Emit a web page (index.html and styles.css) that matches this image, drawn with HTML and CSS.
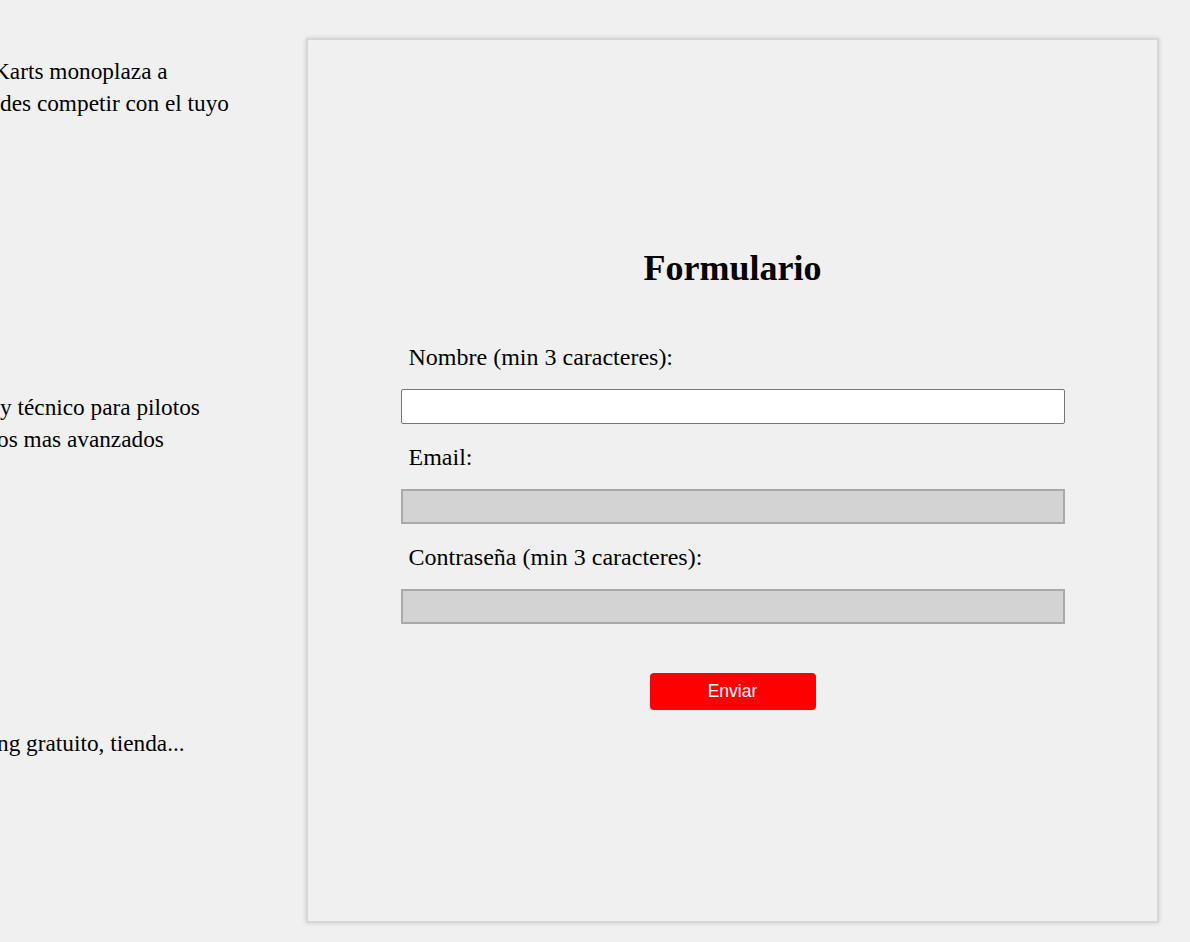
FILE: index.html
```html
<!DOCTYPE html>
<html lang="es">
<head>
<meta charset="utf-8">
<title>Formulario</title>
<link rel="stylesheet" href="styles.css">
</head>
<body>
<div class="page">
  <div class="left">
    <section class="info">
      <p class="line cut-k">Karts monoplaza a</p>
      <p class="line">des competir con el tuyo</p>
    </section>
    <section class="info">
      <p class="line">y técnico para pilotos</p>
      <p class="line cut-o">os mas avanzados</p>
    </section>
    <section class="info">
      <p class="line cut-n">ng gratuito, tienda...</p>
    </section>
  </div>
  <div class="card">
    <h2 class="title">Formulario</h2>
    <form class="form">
      <label class="label" for="nombre">Nombre (min 3 caracteres):</label>
      <input class="field" id="nombre" type="text">
      <label class="label" for="email">Email:</label>
      <input class="field off" id="email" type="email" disabled>
      <label class="label" for="pass">Contraseña (min 3 caracteres):</label>
      <input class="field off" id="pass" type="password" disabled>
      <button class="send" type="button">Enviar</button>
    </form>
  </div>
</div>
</body>
</html>
```
FILE: styles.css
```css
html, body {
  margin: 0;
  padding: 0;
  background: #f0f0f0;
  font-family: "Liberation Serif", "Times New Roman", serif;
  color: #000;
}
.page {
  display: flex;
  gap: 32px;
  padding-top: 38px;
  width: 1190px;
  height: 942px;
  box-sizing: border-box;
}
.left {
  width: 274px;
  overflow: hidden;
  padding-top: 17px;
}
.info {
  height: 336px;
}
.line {
  margin: 0;
  font-size: 23.3px;
  line-height: 32px;
  white-space: nowrap;
}
.cut-k { margin-left: -7px; }
.cut-o { margin-left: -3px; }
.cut-n { margin-left: -3px; }
.card {
  width: 853px;
  height: 885px;
  box-sizing: border-box;
  border: 2px solid #d6d6d6;
  box-shadow: 0 0 5px rgba(0, 0, 0, 0.14);
  background: #f0f0f0;
  display: flex;
  flex-direction: column;
  align-items: center;
  padding-top: 208px;
}
.title {
  margin: 0;
  font-size: 36px;
  line-height: 40px;
  font-weight: bold;
}
.form {
  width: 664px;
  display: flex;
  flex-direction: column;
  margin-top: 55px;
}
.label {
  display: block;
  font-size: 24px;
  line-height: 28px;
  padding-left: 8px;
  margin-top: 19px;
}
.label:first-child { margin-top: 0; }
.field {
  display: block;
  margin: 18px 0 0;
  width: 664px;
  height: 35px;
  box-sizing: border-box;
  border: 1px solid #767676;
  border-radius: 2px;
  background: #fff;
  font-size: 16px;
  padding: 2px 6px;
}
.field.off {
  background: #d3d3d3;
  border: 2px solid #a9a9a9;
  border-radius: 0;
}
.send {
  align-self: center;
  margin-top: 49px;
  width: 166px;
  height: 37px;
  border: none;
  border-radius: 4px;
  background: #ff0000;
  color: #fff;
  font-family: "Liberation Sans", Arial, sans-serif;
  font-size: 17.5px;
  padding: 0;
}
```
